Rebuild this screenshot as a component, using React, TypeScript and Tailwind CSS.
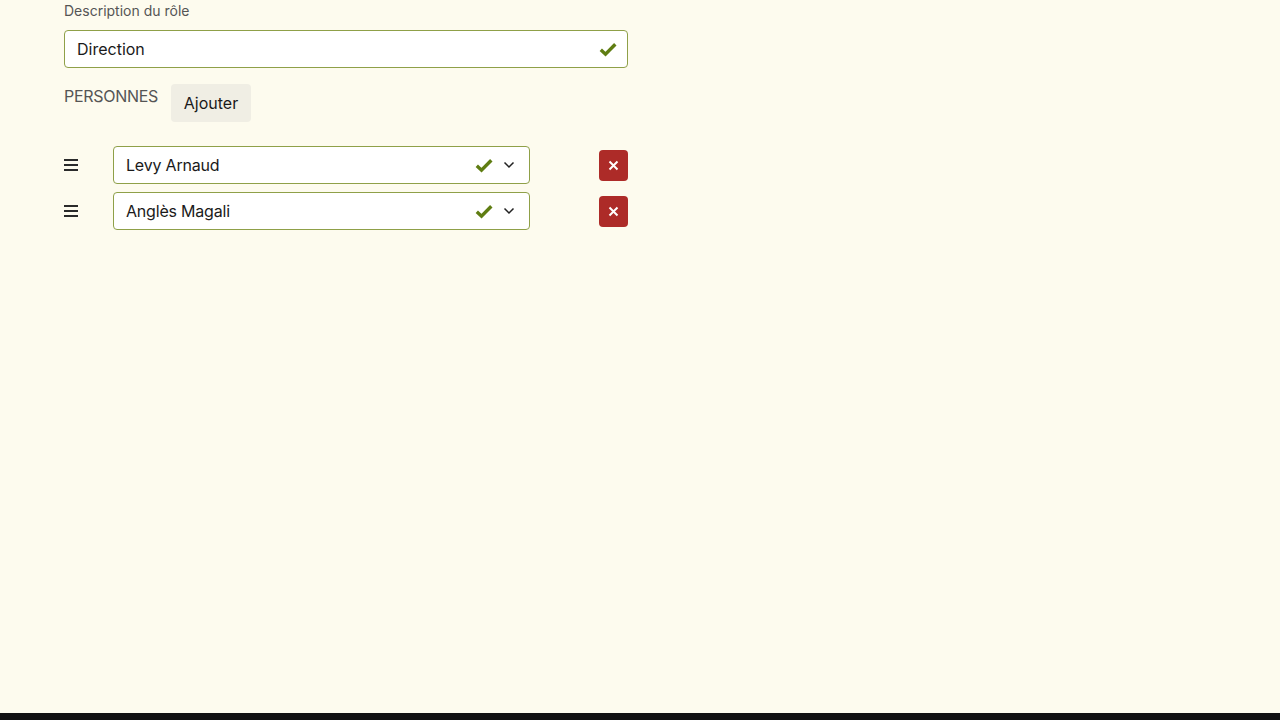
import React from "react";

const Check = () => (
  <svg width="18" height="15" viewBox="0 0 18 15" className="shrink-0">
    <path d="M1.8 7.8 L6.5 12.2 L16.3 2.2" fill="none" stroke="#5f7d12" strokeWidth="3.4" strokeLinecap="butt" strokeLinejoin="miter" />
  </svg>
);

const Chevron = () => (
  <svg width="12" height="8" viewBox="0 0 12 8" className="shrink-0">
    <path d="M1.5 1.5 L6 6 L10.5 1.5" fill="none" stroke="#222" strokeWidth="1.5" />
  </svg>
);

const Burger = () => (
  <svg width="14" height="12" viewBox="0 0 14 12">
    <rect x="0" y="0" width="14" height="2" fill="#2a2a2a" />
    <rect x="0" y="5" width="14" height="2" fill="#2a2a2a" />
    <rect x="0" y="10" width="14" height="2" fill="#2a2a2a" />
  </svg>
);

const Row = ({ name }: { name: string }) => (
  <div className="flex items-center h-[38px]">
    <div className="w-[49px] flex items-center">
      <Burger />
    </div>
    <div className="w-[417px] h-[38px] flex items-center bg-white border border-[#8fa048] rounded-[4px] pl-3 pr-[14px]">
      <span className="flex-1 text-[16px] text-[#1a1a1a] tracking-[-0.2px]">{name}</span>
      <Check />
      <span className="w-[10px]" />
      <Chevron />
    </div>
    <div className="flex-1" />
    <button className="w-[29px] h-[31px] rounded-[4px] bg-[#ad2b28] flex items-center justify-center">
      <svg width="11" height="11" viewBox="0 0 11 11">
        <path d="M1.5 1.5 L9.5 9.5 M9.5 1.5 L1.5 9.5" stroke="#fff" strokeWidth="2" />
      </svg>
    </button>
  </div>
);

export default function App() {
  return (
    <div
      className="w-[1280px] h-[720px] bg-[#fdfbee] flex flex-col"
      style={{ fontFamily: "Inter, 'Noto Sans', sans-serif" }}
    >
      <div className="flex-1 pl-16 pt-[2px]">
        <div className="w-[564px]">
          <div className="text-[14px] leading-[17px] text-[#555] mb-[11px]">Description du rôle</div>
          <div className="h-[38px] flex items-center bg-white border border-[#8fa048] rounded-[4px] pl-3 pr-[10px]">
            <span className="flex-1 text-[16px] text-[#1a1a1a]">Direction</span>
            <Check />
          </div>
          <div className="flex items-start mt-4 h-[38px]">
            <span className="text-[16px] text-[#555] w-[107px] tracking-[-0.3px]">PERSONNES</span>
            <button className="w-[80px] h-[38px] rounded-[4px] bg-[#f0eee4] text-[16px] text-[#1a1a1a]">Ajouter</button>
          </div>
          <div className="mt-[24px] flex flex-col gap-2">
            <Row name="Levy Arnaud" />
            <Row name="Anglès Magali" />
          </div>
        </div>
      </div>
      <div className="h-[7px] bg-[#111]" />
    </div>
  );
}
